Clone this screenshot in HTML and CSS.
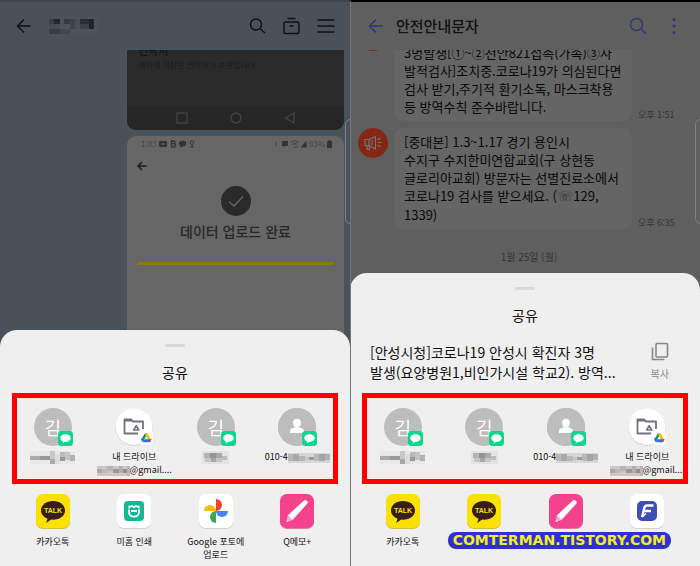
FILE: index.html
```html
<!DOCTYPE html>
<html lang="ko">

<head>
    <meta charset="UTF-8">
    <meta name="viewport" content="width=device-width, initial-scale=1.0">
    <title>공유</title>
    <link rel="stylesheet" href="styles.css">
</head>

<body>
    <!-- Shared icons -->
    <svg class="sprite" width="0" height="0" aria-hidden="true">
        <symbol id="chat-badge" viewBox="0 0 15 15">
            <rect width="15" height="15" rx="3.5" fill="#0fd68c"/>
            <path d="M7.5 3.2c3 0 5.2 1.7 5.2 3.9S10.500 11 7.500 11l-.9-.1L5 12.600l-.1-2.200C3.300 9.700 2.300 8.600 2.300 7.100c0-2.200 2.200-3.900 5.200-3.900z" fill="#fff"/>
        </symbol>
        <symbol id="person" viewBox="0 0 38 38">
            <circle cx="19" cy="19" r="19" fill="#bdbdbd"/>
            <ellipse cx="19" cy="15" rx="3.900" ry="4.200" fill="#fff"/>
            <path d="M12 25v-2c0-2.200 3-3.400 5-3.700h4c2 .3 5 1.500 5 3.700v2z" fill="#fff"/>
        </symbol>
        <symbol id="drive" viewBox="0 0 38 38">
            <circle cx="19" cy="19.500" r="18.500" fill="#d2d2d2"/>
            <circle cx="19" cy="18.700" r="18.300" fill="#fff"/>
            <path d="M23 25.500H9.500v-14h6.500l2 2h10v7.500" fill="none" stroke="#6f747a" stroke-width="1.800" stroke-linejoin="round"/>
            <path d="M9.500 11h6.500l2 2.500H9.500z" fill="#6f747a"/>
            <path d="M21.200 17.600l2.600 4.400h-5.200z" fill="none" stroke="#6f747a" stroke-width="1.600" stroke-linejoin="round"/>
            <rect x="24" y="23" width="14" height="14" rx="4" fill="#fff"/>
            <path d="M29.800 25.500h2.800l-4 7.200-1.500-2.400z" fill="#0f9d58"/>
            <path d="M29.800 25.500h2.800l4 6.900h-3z" fill="#fbbc04"/>
            <path d="M29.600 31.200h6.900l-1.500 3h-7.300z" fill="#2b6de8"/>
            <path d="M33.600 31.200h2.900l-1.500 3z" fill="#ea4335"/>
            <path d="M26 31.500l1.500-2.500 1.600 2.700-1.400 2.500z" fill="#2b6de8"/>
        </symbol>
        <symbol id="talk" viewBox="0 0 34 35">
            <rect y="1" width="34" height="34" rx="7" fill="#c9bd4c"/>
            <rect width="34" height="34" rx="7" fill="#fae100"/>
            <path d="M17 7c7 0 12 4.200 12 9.400s-5 9.300-12 9.300l-1.800-.1-5 3.500 1.300-4.600C7.500 22.900 5 20 5 16.400 5 11.200 10 7 17 7z" fill="#371d1e"/>
            <text x="17" y="19" text-anchor="middle" class="talk-word">TALK</text>
        </symbol>
        <symbol id="mihome" viewBox="0 0 34 35">
            <rect y="1" width="34" height="34" rx="7" fill="#d3d3d3"/>
            <rect width="34" height="34" rx="7" fill="#fff"/>
            <rect x="7" y="7" width="20" height="20" rx="4" fill="#12b995"/>
            <path d="M12 15.500v2c0 3.500 1.800 5.200 5 5.200s5-1.700 5-5.200v-2M14 17h6" fill="none" stroke="#fff" stroke-width="1.800"/>
            <path d="M12.200 11.500v2.200l2.800-2 2 1.800 2-1.800 2.800 2v-2.200" fill="none" stroke="#fff" stroke-width="1.400"/>
        </symbol>
        <symbol id="photos" viewBox="0 0 34 35">
            <rect y="1" width="34" height="34" rx="7" fill="#d3d3d3"/>
            <rect width="34" height="34" rx="7" fill="#fff"/>
            <path d="M17 5a6 6 0 0 1 0 12z" fill="#ea4335"/>
            <path d="M29 17a6 6 0 0 1-12 0z" fill="#4285f4"/>
            <path d="M17 29a6 6 0 0 1 0-12z" fill="#34a853"/>
            <path d="M5 17a6 6 0 0 1 12 0z" fill="#fbbc04"/>
        </symbol>
        <symbol id="qmemo" viewBox="0 0 34 35">
            <rect y="1" width="34" height="34" rx="7" fill="#d9809f"/>
            <rect width="34" height="34" rx="7" fill="#f4438c"/>
            <path d="M24 6.500c1.500-1.400 4.700 1.300 3.400 3L12.500 26l-4.800-4.600z" fill="#fff"/>
            <path d="M7.700 21.400l4.800 4.600-5.800 2z" fill="#f7b3cd"/>
            <path d="M6.800 26l1.700 1.500-1.800.5z" fill="#fff"/>
        </symbol>
        <symbol id="fapp" viewBox="0 0 34 35">
            <rect y="1" width="34" height="34" rx="7" fill="#d3d3d3"/>
            <rect width="34" height="34" rx="7" fill="#fff"/>
            <rect x="7" y="7" width="20" height="20" rx="5" fill="#3d4fb5"/>
            <path d="M23.500 11.500h-6.300c-1.500 0-2.400.7-2.800 2.200L12 23M13.800 17h7.200" fill="none" stroke="#fff" stroke-width="2.400"/>
            <path d="M12 23l4-3.500" stroke="#fff" stroke-width="1.500"/>
        </symbol>

        <!-- Pixelated names -->
        <symbol id="mosaic-name" viewBox="0 0 45 13">
            <rect width="45" height="13" fill="#e8e8e8"/>
            <rect y="5" width="10" height="4" fill="#aaa"/>
            <rect x="10" y="5" width="10" height="4" fill="#999"/>
            <rect x="20" width="5" height="9" fill="#c8c8c8"/>
            <rect x="20" y="8" width="5" height="5" fill="#aaa"/>
            <rect x="25" y="3" width="5" height="10" fill="#ddd"/>
            <rect x="30" y="1" width="5" height="5" fill="#bbb"/>
            <rect x="30" y="6" width="5" height="4" fill="#999"/>
            <rect x="35" y="1" width="5" height="8" fill="#c4c4c4"/>
            <rect x="40" y="4" width="5" height="6" fill="#b2b2b2"/>
        </symbol>
        <symbol id="mosaic-short" viewBox="0 0 27 13">
            <rect width="27" height="13" fill="#e3e3e3"/>
            <rect x="2" y="2" width="6" height="5" fill="#b5b5b5"/>
            <rect x="8" y="2" width="6" height="5" fill="#959595"/>
            <rect x="14" y="2" width="6" height="5" fill="#aaa"/>
            <rect x="20" y="5" width="5" height="4" fill="#bdbdbd"/>
            <rect x="3" y="7" width="17" height="4" fill="#c6c6c6"/>
            <rect x="9" y="7" width="5" height="4" fill="#a5a5a5"/>
        </symbol>
        <symbol id="mosaic-mail" viewBox="0 0 33 10">
            <rect width="33" height="10" fill="#c9c9c9"/>
            <rect y="3" width="5" height="4" fill="#a8a8a8"/>
            <rect x="5" y="3" width="5" height="4" fill="#bbb"/>
            <rect x="10" width="6" height="5" fill="#b5b5b5"/>
            <rect x="16" y="3" width="6" height="4" fill="#999"/>
            <rect x="22" width="4" height="7" fill="#b0b0b0"/>
            <rect x="26" y="3" width="4" height="4" fill="#8f8f8f"/>
            <rect x="30" width="3" height="10" fill="#b7b7b7"/>
        </symbol>
        <symbol id="mosaic-phone" viewBox="0 0 42 10">
            <rect width="42" height="10" fill="#d6d6d6"/>
            <rect y="1" width="5" height="7" fill="#b9b9b9"/>
            <rect x="5" y="1" width="6" height="7" fill="#a8a8a8"/>
            <rect x="11" y="3" width="6" height="5" fill="#b8b8b8"/>
            <rect x="17" y="4" width="4" height="3" fill="#c6c6c6"/>
            <rect x="21" y="4" width="5" height="3" fill="#9b9b9b"/>
            <rect x="26" y="1" width="5" height="7" fill="#b9b9b9"/>
            <rect x="31" y="1" width="6" height="7" fill="#a4a4a4"/>
            <rect x="37" y="1" width="5" height="6" fill="#b1b1b1"/>
        </symbol>
    </svg>

    <main class="phones">
        <!-- Chat room -->
        <section class="phone chat">
            <header class="topbar">
                <button class="icon-btn" aria-label="뒤로">
                    <svg width="16" height="16" viewBox="0 0 16 16"><path d="M14.500 8h-13M8 1.500L1.500 8 8 14.500"/></svg>
                </button>
                <svg class="room-name" width="50" height="16" viewBox="0 0 50 16" role="img" aria-label="이름">
                    <rect width="50" height="16" fill="#4b535b"/>
                    <rect x="1" y="1" width="5" height="5" fill="#373e45"/>
                    <rect x="6" y="1" width="6" height="5" fill="#22272c"/>
                    <rect x="1" y="6" width="11" height="5" fill="#454b51"/>
                    <rect x="1" y="11" width="11" height="5" fill="#373d43"/>
                    <rect x="12" y="11" width="10" height="5" fill="#42484e"/>
                    <rect x="16" y="1" width="6" height="5" fill="#353b41"/>
                    <rect x="22" y="1" width="5" height="10" fill="#3c434a"/>
                    <rect x="27" y="1" width="5" height="10" fill="#474e55"/>
                    <rect x="32" y="1" width="9" height="5" fill="#2b3035"/>
                    <rect x="32" y="6" width="9" height="5" fill="#3c4248"/>
                    <rect x="41" y="1" width="5" height="10" fill="#1f2428"/>
                </svg>
                <span class="spacer"></span>
                <button class="icon-btn" aria-label="검색">
                    <svg width="18" height="18" viewBox="0 0 18 18"><circle cx="7" cy="7.500" r="5.500"/><path d="M11 11.500L16 16"/></svg>
                </button>
                <button class="icon-btn" aria-label="서랍">
                    <svg width="18" height="18" viewBox="0 0 18 18"><rect x="1" y="5" width="15" height="11.500" rx="1.500"/><path d="M4.500 1.500h8M6.500 9h4"/></svg>
                </button>
                <button class="icon-btn" aria-label="메뉴">
                    <svg width="18" height="18" viewBox="0 0 18 18"><path d="M.5 3h17M.5 9h17M.5 15h17"/></svg>
                </button>
            </header>
            <div class="photos">
                <div class="shot shot-dark">
                    <div class="shot-text">
                        <h3>연락처</h3>
                        <p>여기에 저장된 연락처가 보관됩니다.</p>
                    </div>
                    <div class="navkeys">
                        <svg width="12" height="12" viewBox="0 0 12 12"><rect x="1" y="1" width="10" height="10"/></svg>
                        <svg width="12" height="12" viewBox="0 0 12 12"><circle cx="6" cy="6" r="5"/></svg>
                        <svg width="12" height="12" viewBox="0 0 12 12"><path d="M10 1v10L1.500 6z"/></svg>
                    </div>
                </div>
                <div class="shot shot-light">
                    <div class="status">
                        <span>1:03</span>
                        <svg width="36" height="8" viewBox="0 0 36 8">
                            <rect y="1" width="8" height="6" rx="1"/>
                            <path d="M2.500 4h3" stroke="#666" stroke-width="1.500"/>
                            <path d="M12.500 1h2c2 0 2 2.700 0 2.700h-2zM12.500 3.700H15c2 0 2 3.300 0 3.300h-2.500z" fill="none" stroke="#333" stroke-width="1.300"/>
                            <path d="M23.500.5c5 0 5 6 0 6l-2 1.500v-2c-3-1.500-1.500-5.500 2-5.500z"/>
                            <circle cx="33" cy="2.500" r="1.800" fill="none" stroke="#333"/>
                            <path d="M31 7h4M33 4.500V7" stroke="#333"/>
                        </svg>
                        <span class="spacer"></span>
                        <svg width="32" height="8" viewBox="0 0 32 8">
                            <path d="M1 1.500v5" stroke="#444"/>
                            <path d="M7 1h6v5h-3L8.500 7.500V6H7z"/>
                            <path d="M16 2.500c2-1.800 5-1.800 7 0M17.500 4.500c1.200-1 3-1 4 0M19 7h4" fill="none" stroke="#444" stroke-width="1.200"/>
                            <path d="M31.500.5V7.500h-6z"/>
                        </svg>
                        <span>93%</span>
                        <svg width="5" height="8" viewBox="0 0 5 8"><path d="M1.500 0h2v1H5v7H0V1h1.500z"/></svg>
                    </div>
                    <svg class="shot-back" width="10" height="10" viewBox="0 0 10 10"><path d="M9.500 5H1M5 1L1 5l4 4"/></svg>
                    <svg class="check" width="30" height="30" viewBox="0 0 30 30">
                        <circle cx="15" cy="15" r="15" fill="#2a2a2a"/>
                        <path d="M8 15.500l5 4.500 9-9.500" fill="none" stroke="#666" stroke-width="1.300"/>
                    </svg>
                    <p class="done">데이터 업로드 완료</p>
                    <div class="progress"></div>
                </div>
            </div>
            <div class="edge"></div>

            <div class="sheet">
                <div class="handle"></div>
                <h2>공유</h2>
                <div class="people">
                    <button class="item">
                        <span class="avatar">김<svg class="badge" width="15" height="15"><use href="#chat-badge"/></svg></span>
                        <span class="label"><svg class="mosaic" width="45" height="13"><use href="#mosaic-name"/></svg></span>
                    </button>
                    <button class="item">
                        <svg width="38" height="38"><use href="#drive"/></svg>
                        <span class="label">내 드라이브<br><svg class="mosaic" width="33" height="10"><use href="#mosaic-mail"/></svg>@gmail....</span>
                    </button>
                    <button class="item">
                        <span class="avatar">김<svg class="badge" width="15" height="15"><use href="#chat-badge"/></svg></span>
                        <span class="label"><svg class="mosaic" width="27" height="13"><use href="#mosaic-short"/></svg></span>
                    </button>
                    <button class="item">
                        <span class="avatar"><svg width="38" height="38"><use href="#person"/></svg><svg class="badge" width="15" height="15"><use href="#chat-badge"/></svg></span>
                        <span class="label">010-4<svg class="mosaic" width="42" height="10"><use href="#mosaic-phone"/></svg></span>
                    </button>
                </div>
                <div class="apps">
                    <button class="item"><svg width="34" height="35"><use href="#talk"/></svg><span class="label">카카오톡</span></button>
                    <button class="item"><svg width="34" height="35"><use href="#mihome"/></svg><span class="label">미홈 인쇄</span></button>
                    <button class="item"><svg width="34" height="35"><use href="#photos"/></svg><span class="label">Google 포토에<br>업로드</span></button>
                    <button class="item"><svg width="34" height="35"><use href="#qmemo"/></svg><span class="label">Q메모+</span></button>
                </div>
            </div>
        </section>

        <!-- Safety alert messages -->
        <section class="phone sms">
            <header class="topbar">
                <button class="icon-btn" aria-label="뒤로">
                    <svg width="16" height="16" viewBox="0 0 16 16"><path d="M15 8H2M8 1.500L1.500 8 8 14.500"/></svg>
                </button>
                <h1>안전안내문자</h1>
                <span class="spacer"></span>
                <button class="icon-btn" aria-label="검색">
                    <svg width="18" height="18" viewBox="0 0 18 18"><circle cx="7.500" cy="7.500" r="6"/><path d="M12 12l5 5"/></svg>
                </button>
                <button class="icon-btn" aria-label="더보기">
                    <svg width="18" height="18" viewBox="0 0 18 18"><g class="dots"><circle cx="9" cy="2.500" r="1.500"/><circle cx="9" cy="9" r="1.500"/><circle cx="9" cy="15.500" r="1.500"/></g></svg>
                </button>
            </header>
            <div class="viewport">
                <div class="thread">
                    <div class="msg">
                        <span class="alert"></span>
                        <p class="bubble bubble-cut">3명발생[①~②천안821접촉(가족)③사<br>발적검사]조치중.코로나19가 의심된다면<br>검사 받기,주기적 환기소독, 마스크착용<br>등 방역수칙 준수바랍니다.</p>
                        <time>오후 1:51</time>
                    </div>
                    <div class="msg">
                        <span class="alert">
                            <svg width="18" height="16" viewBox="0 0 18 16"><path d="M1 4.500h4v6H1zM5 4.500l6.500-3v12.500L5 10.500M2.500 10.500l1 4h2l-.5-4M8 5v5M13.500 5l3-2M14 7.500h3.500M13.500 10l3 2"/></svg>
                        </span>
                        <p class="bubble">[중대본] 1.3~1.17 경기 용인시<br>수지구 수지한미연합교회(구 상현동<br>글로리아교회) 방문자는 선별진료소에서<br>코로나19 검사를 받으세요. (<span class="tel">☏</span>129,<br>1339)</p>
                        <time>오후 6:35</time>
                    </div>
                    <p class="date">1월 25일 (월)</p>
                </div>
            </div>
            <div class="edge"></div>

            <div class="sheet">
                <div class="handle"></div>
                <h2>공유</h2>
                <div class="preview">
                    <p>[안성시청]코로나19 안성시 확진자 3명<br>발생(요양병원1,비인가시설 학교2). 방역...</p>
                    <button class="copy">
                        <svg width="18" height="20" viewBox="0 0 18 20"><rect x="5" y="1.500" width="11.500" height="13.500" rx="1"/><path d="M1.500 5.500v12h12"/></svg>
                        복사
                    </button>
                </div>
                <div class="people">
                    <button class="item">
                        <span class="avatar">김<svg class="badge" width="15" height="15"><use href="#chat-badge"/></svg></span>
                        <span class="label"><svg class="mosaic" width="45" height="13"><use href="#mosaic-name"/></svg></span>
                    </button>
                    <button class="item">
                        <span class="avatar">김<svg class="badge" width="15" height="15"><use href="#chat-badge"/></svg></span>
                        <span class="label"><svg class="mosaic" width="27" height="13"><use href="#mosaic-short"/></svg></span>
                    </button>
                    <button class="item">
                        <span class="avatar"><svg width="38" height="38"><use href="#person"/></svg><svg class="badge" width="15" height="15"><use href="#chat-badge"/></svg></span>
                        <span class="label">010-4<svg class="mosaic" width="42" height="10"><use href="#mosaic-phone"/></svg></span>
                    </button>
                    <button class="item">
                        <svg width="38" height="38"><use href="#drive"/></svg>
                        <span class="label">내 드라이브<br><svg class="mosaic" width="33" height="10"><use href="#mosaic-mail"/></svg>@gmail....</span>
                    </button>
                </div>
                <div class="apps">
                    <button class="item"><svg width="34" height="35"><use href="#talk"/></svg><span class="label">카카오톡</span></button>
                    <button class="item" aria-label="카카오톡"><svg width="34" height="35"><use href="#talk"/></svg><span class="label"></span></button>
                    <button class="item" aria-label="Q메모+"><svg width="34" height="35"><use href="#qmemo"/></svg><span class="label"></span></button>
                    <button class="item" aria-label="앱"><svg width="34" height="35"><use href="#fapp"/></svg><span class="label"></span></button>
                </div>
            </div>
            <div class="watermark">COMTERMAN.TISTORY.COM</div>
        </section>
    </main>
</body>

</html>
```

FILE: styles.css
```css
* {
    box-sizing: border-box;
}

body {
    margin: 0;
    font-family: "Noto Sans CJK KR", "Noto Sans", sans-serif;
    color: #111;
}

h1, h2, h3, p {
    margin: 0;
    font-weight: normal;
}

button {
    border: 0;
    padding: 0;
    background: none;
    font: inherit;
    color: inherit;
}

svg {
    display: block;
    flex-shrink: 0;
}

.sprite {
    position: absolute;
}

.spacer {
    flex: 1;
}

.phones {
    display: grid;
    grid-template-columns: 1fr 1fr;
    min-height: 100vh;
}

.phone {
    position: relative;
    overflow: hidden;
    display: flex;
    flex-direction: column;
}

/* Top bar */
.topbar {
    display: flex;
    align-items: center;
    height: 48px;
    flex-shrink: 0;
    padding: 0 15px 0 16px;
}

.icon-btn svg {
    fill: none;
    stroke: #0e1114;
    stroke-width: 1.4;
}

/* Chat room */
.chat {
    background: #49525b;
    border-top: 2px solid #3c454e;
}

.chat .topbar {
    gap: 16px;
}

.photos {
    flex: 1;
    display: flex;
    flex-direction: column;
    gap: 6px;
    padding: 0 6px 0 127px;
}

.shot-dark {
    height: 80px;
    display: flex;
    flex-direction: column;
    justify-content: space-between;
    overflow: hidden;
    background: #2a2a2a;
    border-radius: 0 0 9px 9px;
}

.shot-text {
    padding: 0 11px;
    margin-top: -7px;
    color: #141414;
}

.shot-text h3 {
    font-size: 11px;
    font-weight: 500;
    line-height: 15px;
}

.shot-text p {
    font-size: 8px;
    line-height: 14px;
    color: #1a1a1a;
}

.navkeys {
    display: flex;
    justify-content: center;
    gap: 42px;
    padding: 5px 0 6px;
    background: #262626;
}

.navkeys svg {
    fill: none;
    stroke: #444;
    stroke-width: 1.3;
}

.shot-light {
    flex: 1;
    display: flex;
    flex-direction: column;
    align-items: center;
    background: #666;
    border-radius: 9px 9px 0 0;
}

.status {
    align-self: stretch;
    display: flex;
    align-items: center;
    gap: 2px;
    padding: 2px 12px 0 14px;
    font-size: 8px;
    line-height: 11px;
    color: #444;
}

.status svg {
    fill: #333;
}

.shot-back {
    align-self: flex-start;
    margin: 12px 0 0 10px;
    fill: none;
    stroke: #1c1c1c;
    stroke-width: 1.4;
}

.check {
    margin-top: 15px;
}

.done {
    margin-top: 5px;
    font-size: 14px;
    font-weight: 500;
    line-height: 20px;
    color: #282828;
}

.progress {
    align-self: stretch;
    height: 3px;
    margin: 21px 10px 0;
    border-radius: 2px;
    background: #8a7c0c;
}

/* Message list */
.sms {
    background: #5f5f5f;
    border-top: 2px solid #000;
    border-left: 1px solid #777;
}

.sms .topbar {
    gap: 12px;
    padding: 0 17px;
}

.sms .icon-btn svg {
    stroke: #2f3674;
}

.sms .icon-btn:last-child {
    margin-left: 6px;
}

.sms .dots {
    fill: #2f3674;
    stroke: none;
}

.topbar h1 {
    font-size: 15px;
    font-weight: 500;
    line-height: 22px;
}

.viewport {
    flex: 1;
    overflow: hidden;
}

.thread {
    display: flex;
    flex-direction: column;
    gap: 7px;
    margin-top: -29px;
    padding-left: 7px;
}

.msg {
    display: flex;
    align-items: flex-start;
    gap: 6px;
}

.alert {
    display: flex;
    align-items: center;
    justify-content: center;
    width: 30px;
    height: 30px;
    border-radius: 50%;
    background: #862616;
}

.alert svg {
    fill: none;
    stroke: #777;
    stroke-width: 1.1;
}

.bubble {
    width: 238px;
    padding: 5px 0 5px 10px;
    border-radius: 10px;
    background: #656565;
    font-size: 13px;
    line-height: 18px;
    white-space: nowrap;
    color: #080808;
}

.bubble-cut {
    padding-top: 23px;
}

.tel {
    font-family: "DejaVu Sans", sans-serif;
    color: #333;
}

.msg time {
    align-self: flex-end;
    font-size: 9px;
    line-height: 13px;
    color: #353535;
}

.date {
    margin-top: 13px;
    font-size: 10px;
    line-height: 16px;
    text-align: center;
    color: #333;
}

/* Side panel grip on the right edge */
.edge {
    position: absolute;
    top: 117px;
    right: -6px;
    width: 11px;
    height: 105px;
    border: 1px solid #7b848c;
    border-radius: 6px;
}

/* Share sheet */
.sheet {
    position: absolute;
    left: 0;
    right: 0;
    bottom: 0;
    padding-top: 14px;
    border-radius: 17px 17px 0 0;
    background: #efefef;
}

.sms .sheet {
    left: -1px;
}

.handle {
    width: 20px;
    height: 3px;
    margin: 0 auto 15px;
    border-radius: 2px;
    background: #d9d9d9;
}

.sheet h2 {
    font-size: 14px;
    line-height: 20px;
    text-align: center;
}

.preview {
    display: flex;
    justify-content: space-between;
    margin-top: 17px;
    padding: 0 31px 0 20px;
    font-size: 14px;
    line-height: 20px;
    white-space: nowrap;
}

.copy {
    display: flex;
    flex-direction: column;
    align-items: center;
    justify-content: space-between;
    font-size: 10px;
    line-height: 16px;
    color: #888;
}

.copy svg {
    fill: none;
    stroke: #888;
    stroke-width: 1.6;
}

.people,
.apps {
    display: grid;
    grid-template-columns: repeat(4, 1fr);
    margin: 0 12px;
}

.people {
    margin-top: 11px;
    padding: 15px 0 8px;
    outline: 5px solid #f00;
    outline-offset: -5px;
}

.apps {
    padding: 10px 0 5px;
}

.item {
    display: flex;
    flex-direction: column;
    align-items: center;
    gap: 4px;
    min-width: 0;
}

.apps .item {
    gap: 6px;
}

.label {
    min-height: 26px;
    font-size: 9px;
    line-height: 13px;
    white-space: nowrap;
}

.avatar {
    position: relative;
    width: 38px;
    height: 38px;
    border-radius: 50%;
    background: #bdbdbd;
    font-size: 18px;
    line-height: 38px;
    text-align: center;
    color: #fff;
}

.badge {
    position: absolute;
    right: -1px;
    bottom: 0;
}

.mosaic {
    display: inline-block;
    vertical-align: middle;
}

.talk-word {
    font: bold 7px "Liberation Sans", sans-serif;
    fill: #fae100;
}

.watermark {
    position: absolute;
    right: 29px;
    bottom: 17px;
    padding: 0 5px;
    border-radius: 8px;
    background: #3030d0;
    font: bold 14px/17px "DejaVu Sans", sans-serif;
    color: #f2ee2a;
    text-shadow: 0 3px #3030d0, 0 -3px #3030d0, 3px 0 #3030d0, -3px 0 #3030d0,
        2px 2px #3030d0, -2px 2px #3030d0, 2px -2px #3030d0, -2px -2px #3030d0;
}
```
